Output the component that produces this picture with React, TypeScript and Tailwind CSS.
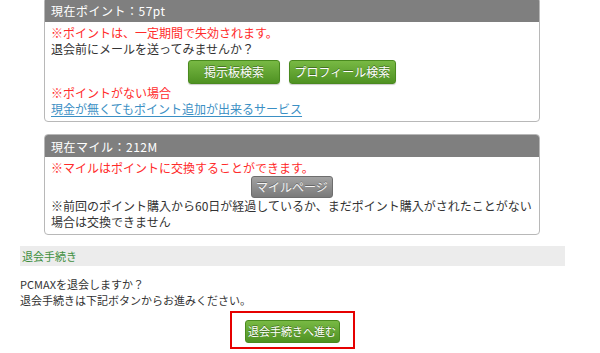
import React from "react";

const font = { fontFamily: '"Noto Sans CJK JP", "Noto Sans", sans-serif' };

const greenBtn =
  "h-[24px] rounded-[3px] border border-[#4a8a1f] bg-gradient-to-b from-[#78b944] to-[#4f9222] text-white text-[12px] leading-[22px] text-center [text-shadow:0_-1px_0_rgba(0,0,0,0.35)] shadow-[0_1px_1px_rgba(0,0,0,0.2)]";

export default function App() {
  return (
    <div className="w-[600px] h-[353px] overflow-hidden bg-white text-[#333] text-[12px] leading-[16px]" style={font}>
      <div className="ml-[20px] w-[545px]">
        {/* Panel 1 */}
        <div className="mx-[24px] w-[496px] -mt-[3px] border border-[#b8b8b8] rounded-[4px] overflow-hidden">
          <div className="h-[24px] bg-[#7f7f7f] text-white px-[6px] leading-[26px] tracking-[0.5px]">
            現在ポイント：57pt
          </div>
          <div className="px-[6px] pt-[3px] pb-[4px]">
            <div className="text-[#ff2b2b]">※ポイントは、一定期間で失効されます。</div>
            <div>退会前にメールを送ってみませんか？</div>
            <div className="flex justify-center gap-[9px] mt-[3px] mb-[1px]">
              <button className={greenBtn + " w-[92px]"}>掲示板検索</button>
              <button className={greenBtn + " w-[107px]"}>プロフィール検索</button>
            </div>
            <div className="text-[#ff2b2b]">※ポイントがない場合</div>
            <div>
              <a className="text-[#3b8fc4] underline underline-offset-[2px]" href="#">
                現金が無くてもポイント追加が出来るサービス
              </a>
            </div>
          </div>
        </div>

        {/* Panel 2 */}
        <div className="mx-[24px] w-[496px] mt-[12px] border border-[#b8b8b8] rounded-[4px] overflow-hidden">
          <div className="h-[22px] bg-[#7f7f7f] text-white px-[6px] leading-[23px] tracking-[0.5px]">
            現在マイル：212M
          </div>
          <div className="px-[6px] pt-[3px] pb-[4px]">
            <div className="text-[#ff2b2b]">※マイルはポイントに交換することができます。</div>
            <div className="flex justify-center">
              <button className="w-[82px] h-[22px] rounded-[3px] border border-[#6e6e6e] bg-gradient-to-b from-[#a3a3a3] to-[#7a7a7a] text-[#f4f4f4] text-[12px] leading-[20px] text-center [text-shadow:0_-1px_0_rgba(0,0,0,0.3)]">
                マイルページ
              </button>
            </div>
            <div>※前回のポイント購入から60日が経過しているか、まだポイント購入がされたことがない</div>
            <div>場合は交換できません</div>
          </div>
        </div>

        {/* Section */}
        <div className="mt-[11px] h-[20px] bg-[#ececec] px-[2px] leading-[20px] text-[11px] text-[#3f8f3f]">
          退会手続き
        </div>
        <div className="mt-[10px] text-[11px] leading-[16px]">
          <div>PCMAXを退会しますか？</div>
          <div>退会手続きは下記ボタンからお進みください。</div>
        </div>
        <div className="flex justify-center mt-[3px] pr-[1px]">
          <div className="w-[125px] h-[38px] border-2 border-[#e60000] flex items-center justify-center pt-[2px]">
            <button className="w-[95px] h-[23px] rounded-[3px] border border-[#4a8a1f] bg-gradient-to-b from-[#78b944] to-[#4f9222] text-white text-[11px] leading-[21px] text-center [text-shadow:0_-1px_0_rgba(0,0,0,0.35)]">
              退会手続きへ進む
            </button>
          </div>
        </div>
      </div>
    </div>
  );
}
